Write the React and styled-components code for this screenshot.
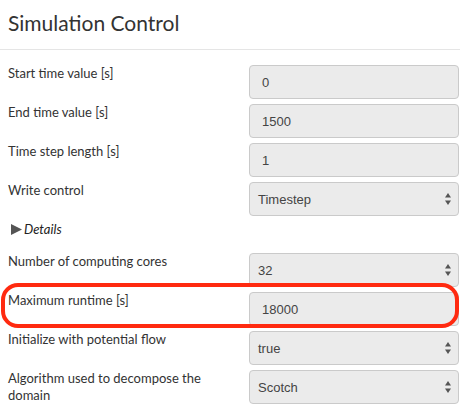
import React from "react";
import styled, { createGlobalStyle } from "styled-components";

const Global = createGlobalStyle`
  html, body { margin: 0; padding: 0; background: #fff; }
  body { font-family: Lato, "Open Sans", sans-serif; color: #333; }
`;

const Page = styled.div`
  position: relative;
  width: 460px;
  height: 417px;
  overflow: hidden;
`;

const Header = styled.div`
  height: 50px;
  box-sizing: border-box;
  border-bottom: 1px solid #e5e5e5;
  padding: 10px 8px 0;
`;

const Title = styled.h2`
  margin: 0;
  font-family: Lato, sans-serif;
  font-weight: 400;
  font-size: 21px;
  line-height: 26px;
  color: #333;
`;

const Form = styled.div`
  display: grid;
  grid-template-columns: 225px 210px;
  column-gap: 16px;
  row-gap: 5px;
  padding: 15px 0 0 8px;
`;

const Label = styled.div`
  font-size: 13px;
  line-height: 17px;
  color: #333;
`;

const Field = styled.div`
  position: relative;
  height: 34px;
  box-sizing: border-box;
  background: #ebebeb;
  border: 1px solid #cacaca;
  border-radius: 4px;
  display: flex;
  align-items: center;
  padding-left: ${(p) => (p.$select ? "8px" : "12px")};
  font-family: "Liberation Sans", Arial, sans-serif;
  font-size: 13px;
  color: #444;
`;

const Arrows = styled.svg`
  position: absolute;
  right: 7px;
  top: 50%;
  transform: translateY(-50%);
`;

const DetailsRow = styled.div`
  grid-column: 1 / -1;
  height: 27px;
  display: flex;
  align-items: flex-start;
  gap: 2px;
  padding-left: 3px;
  font-size: 13px;
  line-height: 17px;
  font-style: italic;
  color: #222;
`;

const Tri = styled.svg`
  margin-top: 3px;
`;

const Highlight = styled.div`
  position: absolute;
  left: 1px;
  top: 283px;
  width: 458px;
  height: 45px;
  box-sizing: border-box;
  border: 4px solid #ff2a10;
  border-radius: 17px;
  pointer-events: none;
`;

const SelectArrows = () => (
  <Arrows width="6" height="12" viewBox="0 0 6 12">
    <polygon points="3,0 6,4.5 0,4.5" fill="#555" />
    <polygon points="0,7.5 6,7.5 3,12" fill="#555" />
  </Arrows>
);

const rows = [
  { label: "Start time value [s]", value: "0" },
  { label: "End time value [s]", value: "1500" },
  { label: "Time step length [s]", value: "1" },
  { label: "Write control", value: "Timestep", select: true },
  { details: true },
  { label: "Number of computing cores", value: "32", select: true },
  { label: "Maximum runtime [s]", value: "18000" },
  { label: "Initialize with potential flow", value: "true", select: true },
  { label: "Algorithm used to decompose the domain", value: "Scotch", select: true },
];

export default function App() {
  return (
    <Page>
      <Global />
      <Header>
        <Title>Simulation Control</Title>
      </Header>
      <Form>
        {rows.map((r, i) =>
          r.details ? (
            <DetailsRow key={i}>
              <Tri width="11" height="11" viewBox="0 0 11 11">
                <polygon points="0,0 11,5.5 0,11" fill="#555" />
              </Tri>
              <span>Details</span>
            </DetailsRow>
          ) : (
            <React.Fragment key={i}>
              <Label>{r.label}</Label>
              <Field $select={r.select}>
                {r.value}
                {r.select && <SelectArrows />}
              </Field>
            </React.Fragment>
          )
        )}
      </Form>
      <Highlight />
    </Page>
  );
}
